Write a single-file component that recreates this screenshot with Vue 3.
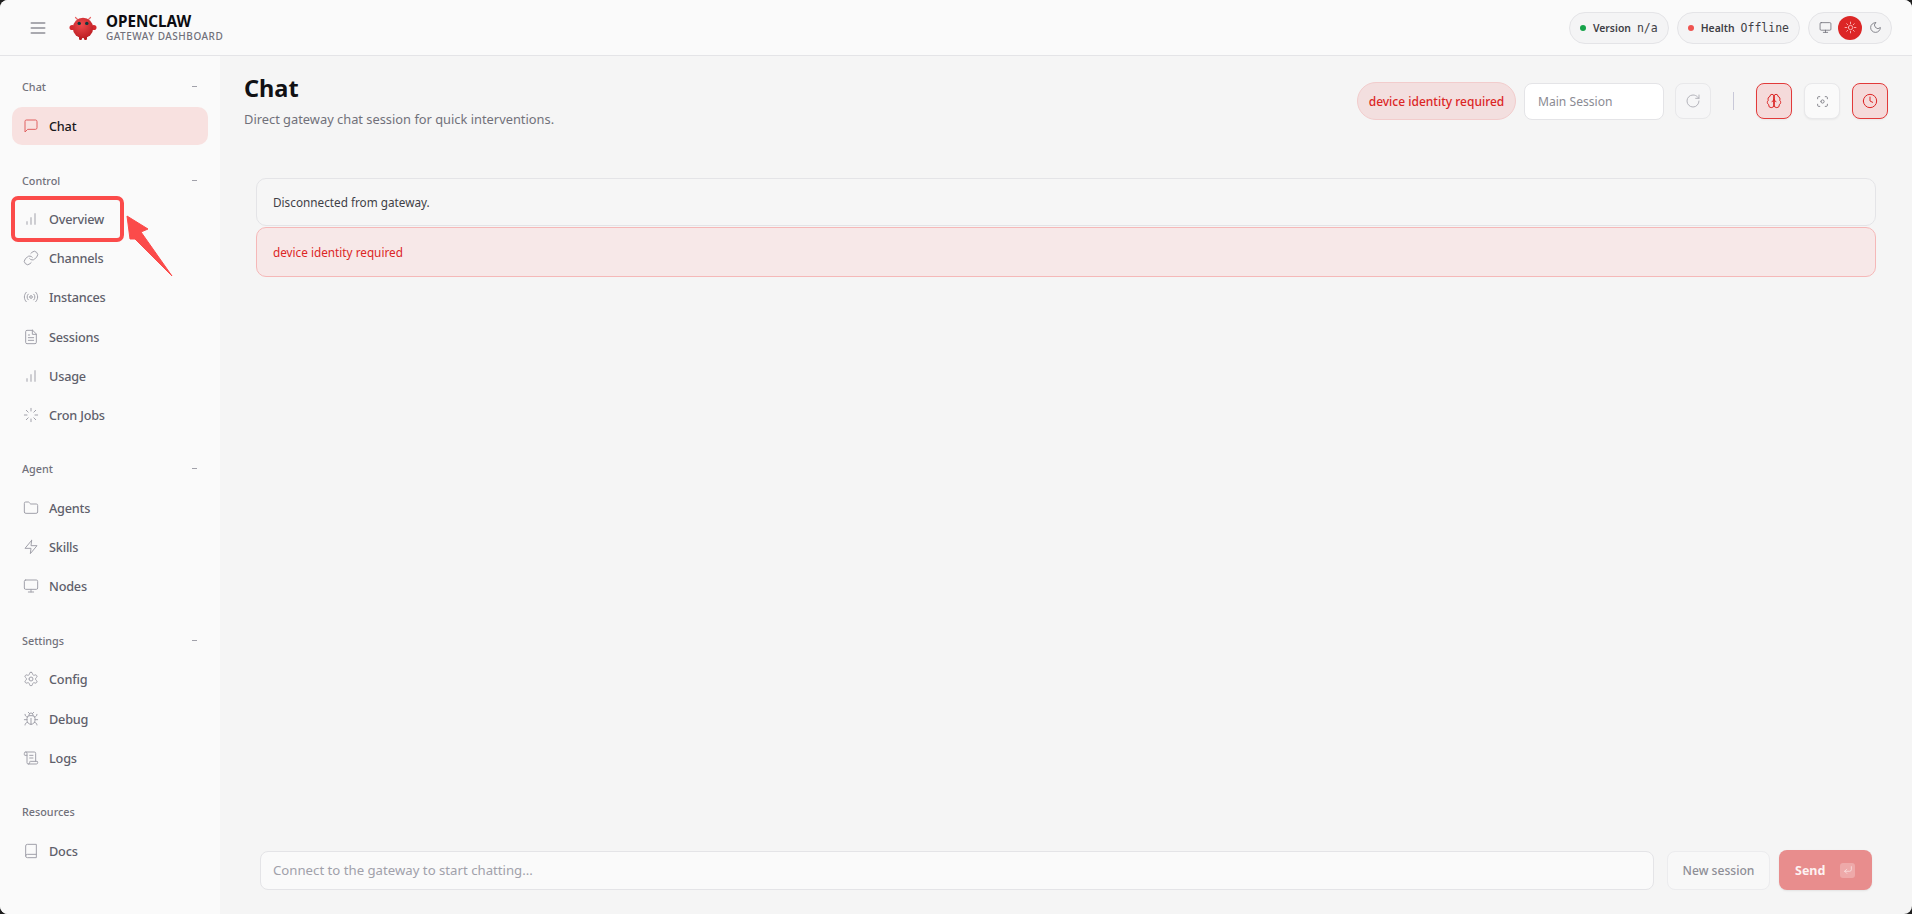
<script setup>
const I = {
  chat: ['M21 15a2 2 0 0 1-2 2H7l-4 4V5a2 2 0 0 1 2-2h14a2 2 0 0 1 2 2z'],
  bars: ['M12 20V10', 'M18 20V4', 'M6 20v-4'],
  link: ['M10 13a5 5 0 0 0 7.54.54l3-3a5 5 0 0 0-7.07-7.07l-1.72 1.71', 'M14 11a5 5 0 0 0-7.54-.54l-3 3a5 5 0 0 0 7.07 7.07l1.71-1.71'],
  radio: ['M4.9 19.1C1 15.2 1 8.8 4.9 4.9', 'M7.8 16.2c-2.3-2.3-2.3-6.1 0-8.5', 'M10 12a2 2 0 1 0 4 0a2 2 0 1 0-4 0', 'M16.2 7.8c2.3 2.3 2.3 6.1 0 8.5', 'M19.1 4.9C23 8.8 23 15.1 19.1 19'],
  file: ['M14.5 2H6a2 2 0 0 0-2 2v16a2 2 0 0 0 2 2h12a2 2 0 0 0 2-2V7.5L14.5 2z', 'M14 2v6h6', 'M16 13H8', 'M16 17H8', 'M10 9H8'],
  loader: ['M12 2v4', 'M12 18v4', 'M4.93 4.93l2.83 2.83', 'M16.24 16.24l2.83 2.83', 'M2 12h4', 'M18 12h4', 'M4.93 19.07l2.83-2.83', 'M16.24 7.76l2.83-2.83'],
  folder: ['M20 20a2 2 0 0 0 2-2V8a2 2 0 0 0-2-2h-7.9a2 2 0 0 1-1.69-.9L9.6 3.9A2 2 0 0 0 7.93 3H4a2 2 0 0 0-2 2v13a2 2 0 0 0 2 2Z'],
  zap: ['M13 2 3 14h9l-1 8 10-12h-9l1-8z'],
  monitor: ['M4 3h16a2 2 0 0 1 2 2v10a2 2 0 0 1-2 2H4a2 2 0 0 1-2-2V5a2 2 0 0 1 2-2z', 'M8 21h8', 'M12 17v4'],
  gear: ['M12.22 2h-.44a2 2 0 0 0-2 2v.18a2 2 0 0 1-1 1.73l-.43.25a2 2 0 0 1-2 0l-.15-.08a2 2 0 0 0-2.73.73l-.22.38a2 2 0 0 0 .73 2.73l.15.1a2 2 0 0 1 1 1.72v.51a2 2 0 0 1-1 1.74l-.15.09a2 2 0 0 0-.73 2.73l.22.38a2 2 0 0 0 2.73.73l.15-.08a2 2 0 0 1 2 0l.43.25a2 2 0 0 1 1 1.73V20a2 2 0 0 0 2 2h.44a2 2 0 0 0 2-2v-.18a2 2 0 0 1 1-1.73l.43-.25a2 2 0 0 1 2 0l.15.08a2 2 0 0 0 2.73-.73l.22-.39a2 2 0 0 0-.73-2.73l-.15-.08a2 2 0 0 1-1-1.74v-.5a2 2 0 0 1 1-1.74l.15-.09a2 2 0 0 0 .73-2.73l-.22-.38a2 2 0 0 0-2.73-.73l-.15.08a2 2 0 0 1-2 0l-.43-.25a2 2 0 0 1-1-1.73V4a2 2 0 0 0-2-2z', 'M9 12a3 3 0 1 0 6 0a3 3 0 1 0-6 0'],
  bug: ['m8 2 1.88 1.88', 'M14.12 3.88 16 2', 'M9 7.13v-1a3.003 3.003 0 1 1 6 0v1', 'M12 20c-3.3 0-6-2.7-6-6v-3a4 4 0 0 1 4-4h4a4 4 0 0 1 4 4v3c0 3.3-2.7 6-6 6', 'M12 20v-9', 'M6.53 9C4.6 8.8 3 7.1 3 5', 'M6 13H2', 'M3 21c0-2.1 1.7-3.9 3.8-4', 'M20.97 5c0 2.1-1.6 3.8-3.5 4', 'M22 13h-4', 'M17.2 17c2.1.1 3.8 1.9 3.8 4'],
  scroll: ['M15 12h-5', 'M15 8h-5', 'M19 17V5a2 2 0 0 0-2-2H4', 'M8 21h12a2 2 0 0 0 2-2v-1a1 1 0 0 0-1-1H11a1 1 0 0 0-1 1v1a2 2 0 1 1-4 0V5a2 2 0 1 0-4 0v2a1 1 0 0 0 1 1h3'],
  book: ['M4 19.5v-15A2.5 2.5 0 0 1 6.5 2H20v20H6.5a2.5 2.5 0 0 1 0-5H20'],
  refresh: ['M21 12a9 9 0 1 1-9-9c2.52 0 4.93 1 6.74 2.74L21 8', 'M21 3v5h-5'],
  brain: ['M12 5a3 3 0 1 0-5.997.125 4 4 0 0 0-2.526 5.77 4 4 0 0 0 .556 6.588A4 4 0 1 0 12 18Z', 'M12 5a3 3 0 1 1 5.997.125 4 4 0 0 1 2.526 5.77 4 4 0 0 1-.556 6.588A4 4 0 1 1 12 18Z', 'M15 13a4.5 4.5 0 0 1-3-4 4.5 4.5 0 0 1-3 4', 'M12 5v13'],
  scan: ['M3 7V5a2 2 0 0 1 2-2h2', 'M17 3h2a2 2 0 0 1 2 2v2', 'M21 17v2a2 2 0 0 1-2 2h-2', 'M7 21H5a2 2 0 0 1-2-2v-2', 'M9 12a3 3 0 1 0 6 0a3 3 0 1 0-6 0'],
  clock: ['M2 12a10 10 0 1 0 20 0a10 10 0 1 0-20 0', 'M12 6v6l4 2'],
  moon: ['M12 3a6 6 0 0 0 9 9 9 9 0 1 1-9-9Z'],
  sun: ['M8 12a4 4 0 1 0 8 0a4 4 0 1 0-8 0', 'M12 2v3', 'M12 19v3', 'M2 12h3', 'M19 12h3', 'M5 5l2 2', 'M17 17l2 2', 'M5 19l2-2', 'M17 7l2-2'],
  menu: ['M4 6h16', 'M4 12h16', 'M4 18h16'],
  enter: ['M9 10l-5 5 5 5', 'M20 4v7a4 4 0 0 1-4 4H4'],
};

const groups = [
  { label: 'Chat', dash: true, items: [{ name: 'Chat', icon: 'chat', active: true }] },
  { label: 'Control', dash: true, items: [
    { name: 'Overview', icon: 'bars' },
    { name: 'Channels', icon: 'link' },
    { name: 'Instances', icon: 'radio' },
    { name: 'Sessions', icon: 'file' },
    { name: 'Usage', icon: 'bars' },
    { name: 'Cron Jobs', icon: 'loader' },
  ] },
  { label: 'Agent', dash: true, items: [
    { name: 'Agents', icon: 'folder' },
    { name: 'Skills', icon: 'zap' },
    { name: 'Nodes', icon: 'monitor' },
  ] },
  { label: 'Settings', dash: true, items: [
    { name: 'Config', icon: 'gear' },
    { name: 'Debug', icon: 'bug' },
    { name: 'Logs', icon: 'scroll' },
  ] },
  { label: 'Resources', dash: false, items: [{ name: 'Docs', icon: 'book' }] },
];
</script>

<template>
  <div class="app">
    <header class="topbar">
      <div class="brand">
        <svg class="ic menu" viewBox="0 0 24 24"><path v-for="d in I.menu" :key="d" :d="d" /></svg>
        <svg class="logo" viewBox="0 0 28 26">
          <defs>
            <radialGradient id="lobster" cx="42%" cy="35%" r="70%">
              <stop offset="0" stop-color="#ee4a4c" />
              <stop offset="1" stop-color="#bb1c22" />
            </radialGradient>
          </defs>
          <path d="M9 5 6.5 2.5M19 5l2.5-2.5" stroke="#e86a6a" stroke-width="1.2" fill="none" stroke-linecap="round" />
          <ellipse cx="3.2" cy="12.5" rx="2.7" ry="2.6" fill="#d42a2e" />
          <ellipse cx="24.8" cy="12.5" rx="2.7" ry="2.6" fill="#d42a2e" />
          <rect x="10" y="20" width="3" height="5" rx="1.2" fill="#b91c22" />
          <rect x="15" y="20" width="3" height="5" rx="1.2" fill="#b91c22" />
          <circle cx="14" cy="13" r="10.2" fill="url(#lobster)" />
          <circle cx="10.2" cy="8.4" r="1.7" fill="#0d3b3d" />
          <circle cx="17.8" cy="8.4" r="1.7" fill="#0d3b3d" />
        </svg>
        <div class="brand-text">
          <div class="brand-title">OPENCLAW</div>
          <div class="brand-sub">GATEWAY DASHBOARD</div>
        </div>
      </div>
      <div class="status">
        <div class="pill"><span class="dot green"></span><span>Version</span><span class="mono">n/a</span></div>
        <div class="pill"><span class="dot red"></span><span>Health</span><span class="mono">Offline</span></div>
        <div class="theme">
          <span class="t-btn"><svg class="ic" viewBox="0 0 24 24"><path v-for="d in I.monitor" :key="d" :d="d" /></svg></span>
          <span class="t-btn on"><svg class="ic" viewBox="0 0 24 24"><path v-for="d in I.sun" :key="d" :d="d" /></svg></span>
          <span class="t-btn"><svg class="ic" viewBox="0 0 24 24"><path v-for="d in I.moon" :key="d" :d="d" /></svg></span>
        </div>
      </div>
    </header>

    <div class="body">
      <aside class="side">
        <section v-for="g in groups" :key="g.label" class="group">
          <div class="g-label"><span>{{ g.label }}</span><span v-if="g.dash" class="g-dash"></span></div>
          <div class="g-items">
            <a v-for="it in g.items" :key="it.name" class="item" :class="{ active: it.active }">
              <svg class="ic nav-ic" viewBox="0 0 24 24"><path v-for="d in I[it.icon]" :key="d" :d="d" /></svg>
              <span>{{ it.name }}</span>
            </a>
          </div>
        </section>
      </aside>

      <main class="main">
        <div class="head">
          <div>
            <h1>Chat</h1>
            <p>Direct gateway chat session for quick interventions.</p>
          </div>
          <div class="tools">
            <span class="err-pill">device identity required</span>
            <div class="session">Main Session</div>
            <button class="sq dim"><svg class="ic" viewBox="0 0 24 24"><path v-for="d in I.refresh" :key="d" :d="d" /></svg></button>
            <span class="sep"></span>
            <button class="sq on"><svg class="ic" viewBox="0 0 24 24"><path v-for="d in I.brain" :key="d" :d="d" /></svg></button>
            <button class="sq"><svg class="ic small" viewBox="0 0 24 24"><path v-for="d in I.scan" :key="d" :d="d" /></svg></button>
            <button class="sq on"><svg class="ic" viewBox="0 0 24 24"><path v-for="d in I.clock" :key="d" :d="d" /></svg></button>
          </div>
        </div>

        <div class="notes">
          <div class="note">Disconnected from gateway.</div>
          <div class="note danger">device identity required</div>
        </div>

        <div class="compose">
          <div class="c-input">Connect to the gateway to start chatting...</div>
          <button class="new">New session</button>
          <button class="send">
            <span>Send</span>
            <span class="kbd"><svg class="ic" viewBox="0 0 24 24"><path v-for="d in I.enter" :key="d" :d="d" /></svg></span>
          </button>
        </div>
      </main>
    </div>

    <svg class="annot" viewBox="0 0 1912 914" aria-hidden="true">
      <rect x="13" y="198" width="109" height="42" rx="5" fill="none" stroke="#fb4b4a" stroke-width="4" />
      <path d="M127 216 148 229 141 232 172 276 135 239 130 239Z" fill="#fb4b4a" stroke="#fb4b4a" stroke-width="1" stroke-linejoin="round" />
    </svg>
  </div>
</template>

<style>
html, body { margin: 0; background: #1f1f1f; }
</style>

<style scoped>
.app {
  position: relative;
  width: 1912px;
  height: 914px;
  overflow: hidden;
  border-radius: 8px;
  background: #f5f5f5;
  display: flex;
  flex-direction: column;
  font-family: "Noto Sans", "Open Sans", sans-serif;
  color: #18181b;
}
.ic {
  width: 16px;
  height: 16px;
  fill: none;
  stroke: currentColor;
  stroke-width: 1.5;
  stroke-linecap: round;
  stroke-linejoin: round;
  display: block;
}
.topbar {
  height: 55px;
  flex: none;
  background: #fafafa;
  border-bottom: 1px solid #e4e4e7;
  display: flex;
  align-items: center;
  justify-content: space-between;
  padding: 0 20px 0 28px;
}
.brand { display: flex; align-items: center; }
.menu { width: 20px; height: 20px; color: #8f8f97; stroke-width: 2; }
.logo { width: 28px; height: 26px; margin-left: 21px; margin-right: 9px; display: block; }
.brand-title { font-size: 15.2px; font-weight: 700; line-height: 18px; color: #0c0c10; }
.brand-sub { font-size: 10px; letter-spacing: .5px; line-height: 13px; color: #71717a; font-weight: 500; }
.status { display: flex; align-items: center; gap: 8px; }
.pill {
  height: 32px;
  box-sizing: border-box;
  display: flex;
  align-items: center;
  gap: 6px;
  padding: 0 10px;
  border: 1px solid #e4e4e7;
  border-radius: 16px;
  background: #f4f4f5;
  font-size: 10.4px;
  font-weight: 600;
  color: #3f3f46;
}
.mono { font-family: "DejaVu Sans Mono", "Liberation Mono", monospace; font-size: 11.5px; font-weight: 400; }
.dot { width: 6px; height: 6px; border-radius: 50%; margin-right: 1px; }
.green { background: #16a34a; }
.red { background: #ef5350; }
.theme {
  height: 32px;
  width: 84px;
  box-sizing: border-box;
  display: flex;
  align-items: center;
  justify-content: center;
  border: 1px solid #e4e4e7;
  border-radius: 16px;
  background: #f4f4f5;
  gap: 1px;
}
.t-btn { width: 24px; height: 24px; border-radius: 50%; display: flex; align-items: center; justify-content: center; color: #71717a; }
.t-btn .ic { width: 13px; height: 13px; }
.t-btn.on { background: #dc2626; color: #fecaca; }
.body { flex: 1; display: flex; min-height: 0; }
.side {
  width: 220px;
  flex: none;
  background: #fafafa;
  box-sizing: border-box;
  padding: 16px 12px 0;
  display: flex;
  flex-direction: column;
  gap: 21px;
}
.g-label {
  height: 28px;
  display: flex;
  align-items: center;
  justify-content: space-between;
  padding: 0 10px;
  font-size: 10.8px;
  font-weight: 500;
  color: #71717a;
  margin-bottom: 6px;
}
.group:first-child .g-label { margin-bottom: 7px; }
.g-dash { width: 5px; height: 1px; background: #a1a1aa; margin-right: 1px; }
.g-items { display: flex; flex-direction: column; gap: 1.2px; }
.item {
  height: 38px;
  display: flex;
  align-items: center;
  gap: 10px;
  padding: 0 11px;
  border-radius: 10px;
  font-size: 12.7px;
  letter-spacing: -.2px;
  font-weight: 500;
  color: #5f5f6b;
}
.item .nav-ic { width: 16px; height: 16px; color: #a1a1aa; }
.item.active { background: #f8e1e0; color: #18181b; }
.item.active .nav-ic { color: #e06060; }
.main {
  flex: 1;
  min-width: 0;
  display: flex;
  flex-direction: column;
  padding: 15px 36px 24px 24px;
}
.head { display: flex; justify-content: space-between; align-items: flex-start; }
h1 { margin: 0; font-size: 23.5px; line-height: 34px; font-weight: 700; color: #111114; }
.head p { margin: 5px 0 0; font-size: 12.85px; line-height: 18px; color: #71717a; }
.tools { display: flex; align-items: center; margin-top: 11px; margin-right: -12px; }
.err-pill {
  height: 38px;
  width: 159px;
  box-sizing: border-box;
  display: flex;
  align-items: center;
  justify-content: center;
  border-radius: 19px;
  background: #f3dfdf;
  border: 1px solid #f2cccc;
  color: #dc2626;
  font-size: 12px;
  font-weight: 500;
  white-space: nowrap;
}
.session {
  width: 140px;
  height: 37px;
  box-sizing: border-box;
  margin-left: 8px;
  display: flex;
  align-items: center;
  padding: 0 13px;
  background: #fff;
  border: 1px solid #e4e4e7;
  border-radius: 8px;
  font-size: 12.1px;
  color: #8b8b93;
}
.sq {
  width: 36px;
  height: 36px;
  padding: 0;
  box-sizing: border-box;
  display: flex;
  align-items: center;
  justify-content: center;
  background: #fafafa;
  border: 1px solid #e8e8ea;
  border-radius: 8px;
  color: #71717a;
  box-shadow: 0 1px 2px rgba(0,0,0,.05);
}
.sq.dim { margin-left: 11px; color: #b4b4bb; box-shadow: none; background: #f6f6f7; }
.sq.on { background: #f5dada; border-color: #e23a3a; color: #dc2626; border-width: 1.4px; }
.sq + .sq { margin-left: 12px; }
.small { width: 13px; height: 13px; }
.sep { width: 1px; height: 18px; background: #c8c8d8; margin: 0 22px 0 22px; }
.notes { margin: 50px 0 0 12px; display: flex; flex-direction: column; gap: 1px; }
.note {
  height: 48px;
  box-sizing: border-box;
  display: flex;
  align-items: center;
  padding: 0 16px;
  background: #f6f6f6;
  border: 1px solid #e4e4e7;
  border-radius: 10px;
  font-size: 11.75px;
  color: #3f3f46;
}
.note.danger { height: 50px; background: #f7e8e8; border-color: #f5b8b8; color: #dc2626; }
.compose { margin-top: auto; margin-left: 16px; display: flex; align-items: center; margin-right: 4px; }
.c-input {
  flex: 1;
  height: 39px;
  box-sizing: border-box;
  display: flex;
  align-items: center;
  padding: 0 12px;
  background: #fafafa;
  border: 1px solid #e4e4e7;
  border-radius: 8px;
  font-size: 13.2px;
  color: #a1a1aa;
}
.new {
  width: 103px;
  height: 39px;
  margin-left: 13px;
  background: #f8f8f8;
  border: 1px solid #ececee;
  border-radius: 8px;
  font: 500 12.1px "Noto Sans", sans-serif;
  color: #8e8e96;
}
.send {
  width: 93px;
  height: 40px;
  margin-left: 9px;
  display: flex;
  align-items: center;
  justify-content: space-between;
  padding: 0 17px 0 16px;
  background: #e88d8d;
  border: 0;
  border-radius: 8px;
  font: 700 12.5px "Noto Sans", sans-serif;
  color: #fdf2f2;
  box-shadow: 0 1px 2px rgba(0,0,0,.08);
}
.kbd { width: 15px; height: 15px; border-radius: 3px; background: rgba(255,255,255,.25); display: flex; align-items: center; justify-content: center; }
.kbd .ic { width: 10px; height: 10px; }
.annot { position: absolute; inset: 0; width: 1912px; height: 914px; pointer-events: none; }
</style>
